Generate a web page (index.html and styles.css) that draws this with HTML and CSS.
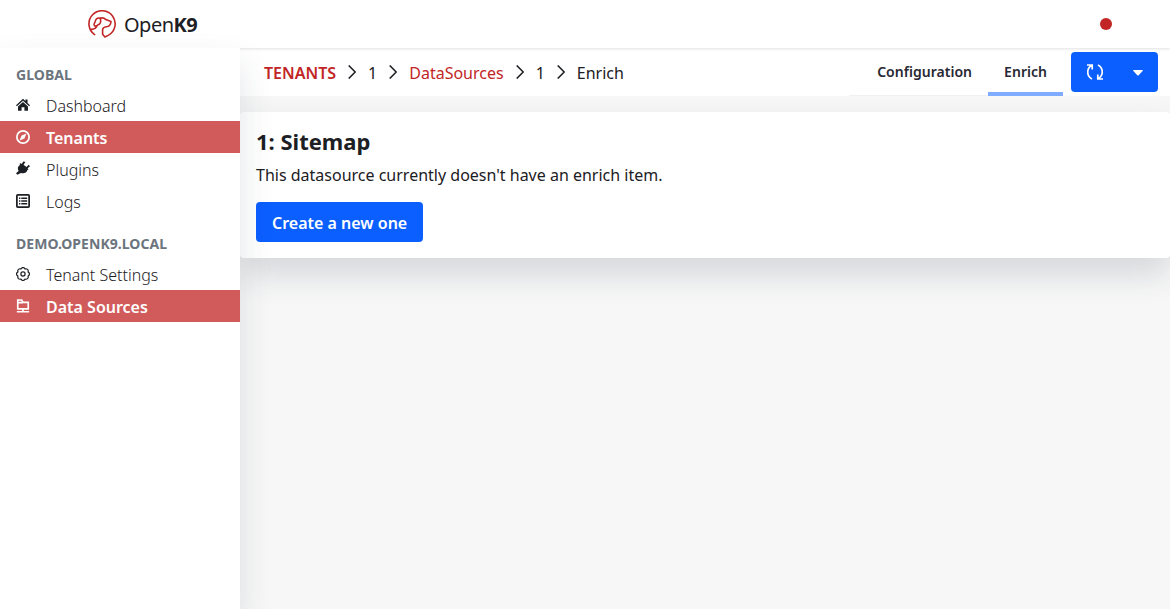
FILE: index.html
```html
<!DOCTYPE html>
<html lang="en">
<head>
<meta charset="utf-8">
<title>OpenK9</title>
<link rel="stylesheet" href="styles.css">
</head>
<body>
<header class="topbar">
  <div class="brand">
    <svg class="brand-logo" viewBox="0 0 28 28" fill="none" stroke="#c22525" stroke-width="1.6" stroke-linecap="round" stroke-linejoin="round">
      <path d="M6.6 24.6A13.1 13.1 0 1 1 20.2 25.4L16.9 27L14.6 24.3V20C14.6 17.5 16.5 17 18.5 16.8C21.5 16.5 22.8 14.5 23 11.5L17.8 9.6C16.3 8 14.2 7.6 12.3 8.2"/>
      <path d="M12.3 8.2C9.2 7.4 7.6 9.2 7.2 11.5L6 14.2C6 16.8 8.8 16.6 10 14.8C12.3 14.3 13.3 12 12.3 8.2"/>
      <path d="M2.6 19.2C5 19.8 7.4 18.7 8.6 16.8"/>
    </svg>
    <span class="brand-name">Open<b>K9</b></span>
  </div>
  <span class="user-dot"></span>
</header>
<div class="layout">
  <nav class="sidebar">
    <h2 class="nav-title">GLOBAL</h2>
    <a class="nav-item"><svg class="nav-icon" viewBox="0 0 16 16" fill="currentColor"><path d="M8 .8L10.8 3.3V1.7H13.2V5.6L16 8.2L15 9.5L8 3.2L1 9.5L0 8.2Z"/><path d="M8 4.6L13.7 9.7V14.5H9.6V10.5H6.4V14.5H2.3V9.7Z"/></svg><span>Dashboard</span></a>
    <a class="nav-item active"><svg class="nav-icon" viewBox="0 0 16 16"><circle cx="8" cy="8" r="7" fill="none" stroke="currentColor" stroke-width="2"/><path d="M12 4L9.6 9.6L4 12L6.4 6.4Z" fill="currentColor"/></svg><span>Tenants</span></a>
    <a class="nav-item"><svg class="nav-icon plug" viewBox="0 0 16 16" fill="currentColor"><path d="M4.4 2.4L6.2 3.4L8.9 .2L10.6 1.5L8.6 4.3L12 6.8L14.5 4.3L16 5.9L13.3 8.4L14.3 9.6L13 10.4C12.2 13.6 8.6 15 5.6 13.6L1.6 15.8L0 14L3 11.5C1.4 8.8 2 6 4.4 4.6Z"/></svg><span>Plugins</span></a>
    <a class="nav-item"><svg class="nav-icon" viewBox="0 0 16 16" fill="currentColor"><path fill-rule="evenodd" d="M2 0H14Q16 0 16 2V14Q16 16 14 16H2Q0 16 0 14V2Q0 0 2 0ZM2 2V14H14V2Z"/><path d="M3.4 4H5V5.6H3.4ZM6 4H12.8V5.6H6ZM3.4 7.2H5V8.8H3.4ZM6 7.2H12.8V8.8H6ZM3.4 10.4H5V12H3.4ZM6 10.4H12.8V12H6Z"/></svg><span>Logs</span></a>
    <h2 class="nav-title tenant">DEMO.OPENK9.LOCAL</h2>
    <a class="nav-item"><svg class="nav-icon" viewBox="0 0 16 16" fill="none" stroke="currentColor" stroke-width="1.4" stroke-linejoin="round"><path d="M6.4 1.2Q8 .1 9.6 1.2L10.2 2.2L11.7 2Q13.8 2.1 14 4.3L13.8 5.8L14.8 6.4Q15.9 8 14.8 9.6L13.8 10.2L14 11.7Q13.8 13.9 11.7 14L10.2 13.8L9.6 14.8Q8 15.9 6.4 14.8L5.8 13.8L4.3 14Q2.2 13.9 2 11.7L2.2 10.2L1.2 9.6Q.1 8 1.2 6.4L2.2 5.8L2 4.3Q2.2 2.1 4.3 2L5.8 2.2Z"/><circle cx="8" cy="8" r="2.4"/></svg><span>Tenant Settings</span></a>
    <a class="nav-item active"><svg class="nav-icon" viewBox="0 0 16 16" fill="none" stroke="currentColor" stroke-width="1.9"><path d="M2 11.2V1.1H6.5L8 3.9H14V11.2ZM2 4.2H8M8 11.2V14.5M1 14.6H15"/></svg><span>Data Sources</span></a>
  </nav>
  <main class="content">
    <div class="toolbar">
      <div class="crumbs">
        <a class="crumb-root">TENANTS</a>
        <svg class="chevron" viewBox="0 0 8 14"><path d="M.7.5L7.2 7L.7 13.5"/></svg>
        <span>1</span>
        <svg class="chevron" viewBox="0 0 8 14"><path d="M.7.5L7.2 7L.7 13.5"/></svg>
        <a class="crumb-link">DataSources</a>
        <svg class="chevron" viewBox="0 0 8 14"><path d="M.7.5L7.2 7L.7 13.5"/></svg>
        <span>1</span>
        <svg class="chevron" viewBox="0 0 8 14"><path d="M.7.5L7.2 7L.7 13.5"/></svg>
        <span>Enrich</span>
      </div>
      <div class="tabs">
        <a class="tab">Configuration</a>
        <a class="tab selected">Enrich</a>
      </div>
      <div class="actions">
        <svg class="reload" viewBox="0 0 16 16" fill="none" stroke="#fff" stroke-width="1.7"><path d="M5 15C-.6 12 -.6 4.5 4.6 1.6M0 1H5.2V5.5M11 1C16.6 4 16.6 11.5 11.4 14.4M16 15H10.8V10.5"/></svg>
        <svg class="caret" viewBox="0 0 10 6" fill="#fff"><path d="M.6 0H9.4Q10.3.3 9.6 1.1L5.7 5.3Q5 5.9 4.3 5.3L.4 1.1Q-.3.3.6 0Z"/></svg>
      </div>
    </div>
    <section class="card">
      <h1 class="card-title">1: Sitemap</h1>
      <p class="card-text">This datasource currently doesn't have an enrich item.</p>
      <button class="create">Create a new one</button>
    </section>
  </main>
</div>
</body>
</html>
```
FILE: styles.css
```css
* { box-sizing: border-box; }
body {
  margin: 0;
  height: 609px;
  overflow: hidden;
  display: flex;
  flex-direction: column;
  background: #f7f7f7;
  color: #1c2024;
  font: 16px/24px "Noto Sans", sans-serif;
}
.topbar {
  height: 48px;
  flex: none;
  display: flex;
  align-items: center;
  justify-content: space-between;
  padding: 0 58px 0 88px;
  background: #fff;
  box-shadow: 0 1px 3px rgba(0, 0, 0, .12);
  position: relative;
  z-index: 1;
}
.brand { display: flex; align-items: center; gap: 8px; }
.brand-logo { width: 28px; height: 28px; }
.brand-name { font-size: 20px; line-height: 30px; letter-spacing: -.5px; padding-top: 2px; }
.user-dot { width: 12px; height: 12px; border-radius: 50%; background: #c22525; }
.layout { flex: 1; display: flex; min-height: 0; }
.sidebar {
  width: 240px;
  flex: none;
  padding-top: 16px;
  background: #fff;
  box-shadow: 0 16px 32px rgba(39, 51, 73, .13);
  position: relative;
  z-index: 2;
}
.nav-title { margin: 0; padding: 0 16px; height: 25px; font-size: 14px; line-height: 22px; font-weight: 700; letter-spacing: .04px; color: #6c757d; }
.nav-title.tenant { margin-top: 16px; }
.nav-item { display: flex; height: 32px; padding: 0 16px; font-weight: 300; line-height: 34px; }
.nav-item.active { background: #d15b5b; color: #fff; font-weight: 600; }
.nav-icon { width: 14px; height: 14px; margin: 9px 16px 0 0; flex: none; }
.nav-icon.plug { margin-top: 8px; }
.content { flex: 1; }
.toolbar { height: 48px; display: flex; background: #fff; }
.crumbs { display: flex; flex: 1; align-items: center; padding: 2px 0 0 24px; }
.crumb-root { color: #c22525; font-weight: 600; }
.crumb-link { color: #c22525; }
.chevron { width: 8px; height: 14px; margin: -3px 12px 0 12px; fill: none; stroke: #1c2024; stroke-width: 1.6; }
.tabs { display: flex; padding-left: 12px; border-bottom: 1px solid #f0f0f2; }
.tab { height: 48px; padding: 0 16px; font-size: 14px; line-height: 48px; font-weight: 600; letter-spacing: .03px; color: #272833; }
.tab.selected { border-bottom: 4px solid #80acff; }
.actions { width: 87px; height: 40px; margin: 4px 12px 0 8px; padding: 0 15px 0 16px; display: flex; align-items: center; justify-content: space-between; background: #0b5fff; border-radius: 4px; }
.reload { width: 16px; height: 16px; }
.caret { width: 10px; height: 6px; margin-top: 2px; }
.card {
  height: 146px;
  margin-top: 16px;
  padding: 15px 16px 16px;
  background: #fff;
  border-radius: 4px;
  box-shadow: 0 16px 32px rgba(39, 51, 73, .16);
}
.card-title { margin: 0; font-size: 22px; line-height: 29px; font-weight: 700; }
.card-text { margin: 7px 0 15px; }
.create { display: block; height: 40px; padding: 2px 16px 0; border: 0; border-radius: 4px; background: #0b5fff; color: #fff; font: 600 16px/24px "Noto Sans", sans-serif; }
```
